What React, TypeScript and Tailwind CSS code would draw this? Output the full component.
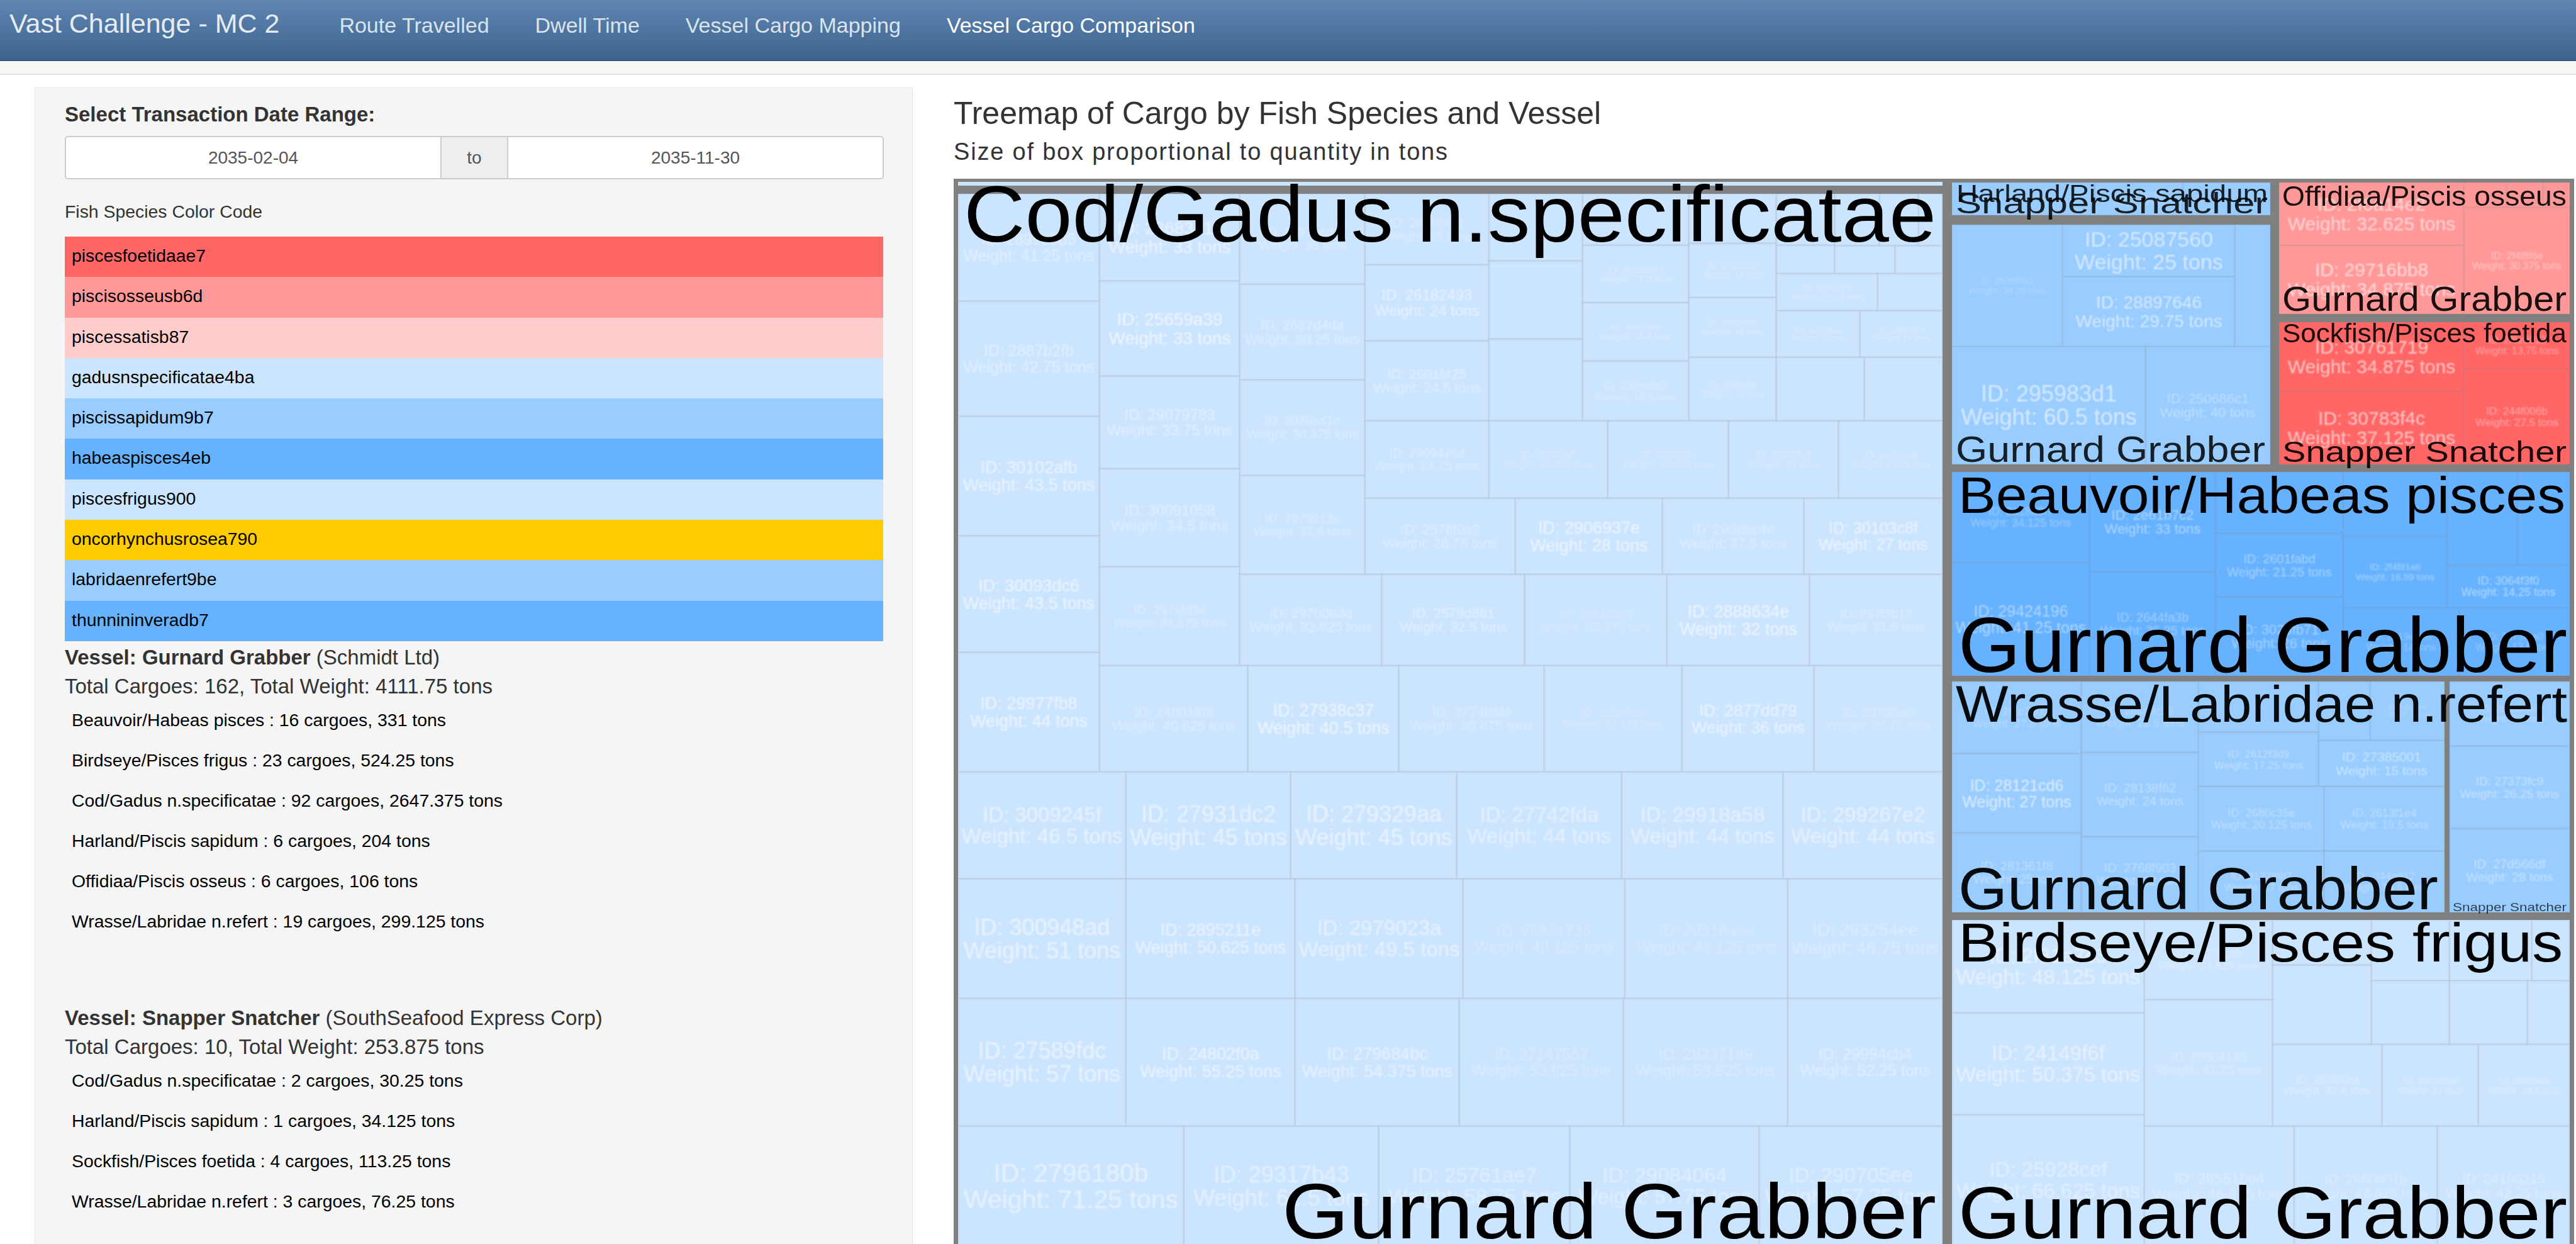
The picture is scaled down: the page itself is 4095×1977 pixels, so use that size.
type Cell = [number, number, number, number, string?, string?, number?, number?];

type Group = {
    x: number;
    y: number;
    r: number;
    b: number;
    fill: string;
    cells: Cell[];
};

type BigLabel = [string, number, number, number, number, number?];

const Y_END = 1980;

const cargoColors = [
    ['piscesfoetidaae7', 'bg-[#ff6666]'],
    ['piscisosseusb6d', 'bg-[#ff9999]'],
    ['piscessatisb87', 'bg-[#ffcccc]'],
    ['gadusnspecificatae4ba', 'bg-[#cce5ff]'],
    ['piscissapidum9b7', 'bg-[#99ccff]'],
    ['habeaspisces4eb', 'bg-[#66b2ff]'],
    ['piscesfrigus900', 'bg-[#cce5ff]'],
    ['oncorhynchusrosea790', 'bg-[#ffcc00]'],
    ['labridaenrefert9be', 'bg-[#99ccff]'],
    ['thunnininveradb7', 'bg-[#66b2ff]'],
];

const groups: Group[] = [
    {
        x: 1523, y: 308, r: 3088, b: Y_END, fill: '#cce5ff',
        cells: [
            [1523, 308, 1748, 479, 'ID: 2899e9d5', 'Weight: 41.25 tons', 25, 0.5],
            [1523, 479, 1748, 662, 'ID: 2887b2fb', 'Weight: 42.75 tons', 25, 0.5],
            [1523, 662, 1748, 852, 'ID: 30102afb', 'Weight: 43.5 tons', 27, 0.7],
            [1523, 852, 1748, 1037, 'ID: 30093dc6', 'Weight: 43.5 tons', 27, 0.75],
            [1523, 1037, 1748, 1227, 'ID: 29977fb8', 'Weight: 44 tons', 27, 0.75],
            [1748, 308, 1971, 447, 'ID: 28683a1c', 'Weight: 33 tons', 28, 0.7],
            [1748, 447, 1971, 598, 'ID: 25659a39', 'Weight: 33 tons', 28, 0.8],
            [1748, 598, 1971, 745, 'ID: 29079783', 'Weight: 33.75 tons', 24, 0.5],
            [1748, 745, 1971, 901, 'ID: 30091058', 'Weight: 34.5 tons', 24, 0.45],
            [1748, 901, 1971, 1058, 'ID: 2976fd36', 'Weight: 34.875 tons', 20, 0.35],
            [1971, 308, 2170, 452, 'ID: 2797a6d1', 'Weight: 35 tons', 20, 0.4],
            [1971, 452, 2170, 604, 'ID: 2687d4da', 'Weight: 30.25 tons', 22, 0.45],
            [1971, 604, 2170, 756, 'ID: 3045a41e', 'Weight: 30.375 tons', 20, 0.4],
            [1971, 756, 2170, 913, 'ID: 2976913e', 'Weight: 31.5 tons', 20, 0.35],
            [2170, 308, 2367, 421, 'ID: 2876c4a1', 'Weight: 26 tons', 20, 0.35],
            [2170, 421, 2367, 542, 'ID: 26182493', 'Weight: 24 tons', 24, 0.6],
            [2170, 542, 2367, 669, 'ID: 2601f425', 'Weight: 24.5 tons', 22, 0.45],
            [2367, 308, 2516, 415],
            [2367, 415, 2516, 539],
            [2367, 539, 2516, 669],
            [2516, 308, 2685, 390],
            [2516, 390, 2685, 481, 'ID: 2833a6e1', 'Weight: 18.5 tons', 15, 0.3],
            [2516, 481, 2685, 574, 'ID: 263f2a5c', 'Weight: 19.5 tons', 15, 0.3],
            [2516, 574, 2685, 669, 'ID: 2906d6d2', 'Weight: 19.5 tons', 17, 0.3],
            [2685, 308, 2824, 387],
            [2685, 387, 2824, 473, 'ID: 27365fa2', 'Weight: 17 tons', 14, 0.3],
            [2685, 473, 2824, 568, 'ID: 28f75d7c', 'Weight: 18 tons', 14, 0.3],
            [2685, 568, 2824, 669, 'ID: 2f4f8d3e', 'Weight: 18 tons', 14, 0.3],
            [2824, 308, 2917, 390],
            [2824, 390, 2917, 435],
            [2917, 390, 3013, 435],
            [3013, 390, 3088, 435],
            [2917, 308, 2988, 390],
            [2988, 308, 3050, 390],
            [3050, 308, 3088, 390],
            [2824, 435, 2985, 494, 'ID: 2f3a7c5d', 'Weight: 15.75 tons', 14, 0.3],
            [2985, 435, 3088, 494],
            [2824, 494, 2957, 568, 'ID: 2a51f3ae', 'Weight: 16 tons', 13, 0.3],
            [2957, 494, 3088, 568, 'ID: 2f99c8d7', 'Weight: 16 tons', 13, 0.3],
            [2824, 568, 2964, 669],
            [2964, 568, 3088, 669],
            [2170, 669, 2367, 792, 'ID: 2909426d', 'Weight: 24.75 tons', 20, 0.35],
            [2367, 669, 2556, 792, 'ID: 2fd9f1a3', 'Weight: 25.625 tons', 16, 0.25],
            [2556, 669, 2748, 792, 'ID: 2b3fb27e', 'Weight: 25.563 tons', 16, 0.25],
            [2748, 669, 2923, 792, 'ID: 2f38d4c1', 'Weight: 27 tons', 16, 0.25],
            [2923, 669, 3088, 792, 'ID: 2a33c9df', 'Weight: 27.75 tons', 15, 0.25],
            [2170, 792, 2409, 913, 'ID: 2578f0a9', 'Weight: 28.75 tons', 22, 0.4],
            [2409, 792, 2643, 913, 'ID: 2906937e', 'Weight: 28 tons', 27, 0.75],
            [2643, 792, 2868, 913, 'ID: 2938bc4e', 'Weight: 27.5 tons', 22, 0.35],
            [2868, 792, 3088, 913, 'ID: 30103c8f', 'Weight: 27 tons', 25, 0.7],
            [1971, 913, 2197, 1058, 'ID: 2970083d', 'Weight: 32.625 tons', 22, 0.4],
            [2197, 913, 2424, 1058, 'ID: 2579d861', 'Weight: 32.5 tons', 22, 0.5],
            [2424, 913, 2650, 1058, 'ID: 2a61c2c9', 'Weight: 32.375 tons', 20, 0.2],
            [2650, 913, 2877, 1058, 'ID: 2888634e', 'Weight: 32 tons', 27, 0.8],
            [2877, 913, 3088, 1058, 'ID: 2970fb16', 'Weight: 31.5 tons', 20, 0.35],
            [1748, 1058, 1984, 1227, 'ID: 24801f08', 'Weight: 40.625 tons', 22, 0.4],
            [1984, 1058, 2224, 1227, 'ID: 27938c37', 'Weight: 40.5 tons', 27, 0.8],
            [2224, 1058, 2455, 1227, 'ID: 2774b6f4', 'Weight: 39.875 tons', 22, 0.35],
            [2455, 1058, 2674, 1227, 'ID: 2a5b7fd4', 'Weight: 37.125 tons', 18, 0.2],
            [2674, 1058, 2884, 1227, 'ID: 2877dd79', 'Weight: 36 tons', 26, 0.7],
            [2884, 1058, 3088, 1227, 'ID: 2975f8a6', 'Weight: 35.75 tons', 20, 0.25],
            [1523, 1227, 1790, 1397, 'ID: 3009245f', 'Weight: 46.5 tons', 33, 0.65],
            [1790, 1227, 2052, 1397, 'ID: 27931dc2', 'Weight: 45 tons', 36, 0.65],
            [2052, 1227, 2316, 1397, 'ID: 279329aa', 'Weight: 45 tons', 36, 0.65],
            [2316, 1227, 2578, 1397, 'ID: 27742fda', 'Weight: 44 tons', 33, 0.55],
            [2578, 1227, 2835, 1397, 'ID: 29918a58', 'Weight: 44 tons', 33, 0.55],
            [2835, 1227, 3088, 1397, 'ID: 299267e2', 'Weight: 44 tons', 33, 0.6],
            [1523, 1397, 1790, 1587, 'ID: 300948ad', 'Weight: 51 tons', 36, 0.65],
            [1790, 1397, 2059, 1587, 'ID: 2895211e', 'Weight: 50.625 tons', 27, 0.7],
            [2059, 1397, 2326, 1587, 'ID: 2979023a', 'Weight: 49.5 tons', 33, 0.6],
            [2326, 1397, 2583, 1587, 'ID: 28831735', 'Weight: 48.125 tons', 25, 0.25],
            [2583, 1397, 2842, 1587, 'ID: 29318abe', 'Weight: 48.125 tons', 25, 0.25],
            [2842, 1397, 3088, 1587, 'ID: 293254ee', 'Weight: 46.75 tons', 28, 0.35],
            [1523, 1587, 1790, 1790, 'ID: 27589fdc', 'Weight: 57 tons', 36, 0.65],
            [1790, 1587, 2059, 1790, 'ID: 24802f0a', 'Weight: 55.25 tons', 27, 0.7],
            [2059, 1587, 2320, 1790, 'ID: 279684bc', 'Weight: 54.375 tons', 27, 0.6],
            [2320, 1587, 2581, 1790, 'ID: 27147557', 'Weight: 53.625 tons', 25, 0.3],
            [2581, 1587, 2842, 1790, 'ID: 292371a9', 'Weight: 53.625 tons', 25, 0.3],
            [2842, 1587, 3088, 1790, 'ID: 29994cb4', 'Weight: 52.25 tons', 25, 0.45],
            [1523, 1790, 1882, Y_END, 'ID: 2796180b', 'Weight: 71.25 tons', 41, 0.6],
            [1882, 1790, 2192, Y_END, 'ID: 29317b43', 'Weight: 61.5 tons', 36, 0.55],
            [2192, 1790, 2496, Y_END, 'ID: 25761ae7', 'Weight: 58.75 tons', 33, 0.45],
            [2496, 1790, 2797, Y_END, 'ID: 29084064', 'Weight: 57.75 tons', 33, 0.45],
            [2797, 1790, 3088, Y_END, 'ID: 290705ee', 'Weight: 57.75 tons', 33, 0.45],
        ],
    },
    {
        x: 3103, y: 290, r: 3609, b: 342, fill: '#99ccff',
        cells: [
            [3103, 290, 3330, 342],
            [3330, 290, 3470, 342, 'ID: 2a1f4c9e', 'Weight: 13 tons', 12, 0.3],
            [3470, 290, 3609, 342],
        ],
    },
    {
        x: 3103, y: 357, r: 3609, b: 738, fill: '#99ccff',
        cells: [
            [3103, 357, 3279, 551, 'ID: 2b36f9a1', 'Weight: 38.25 tons', 15, 0.3],
            [3279, 357, 3553, 440, 'ID: 25087560', 'Weight: 25 tons', 34, 0.7],
            [3279, 440, 3553, 551, 'ID: 28897646', 'Weight: 29.75 tons', 28, 0.7],
            [3553, 357, 3609, 551],
            [3103, 551, 3411, 738, 'ID: 295983d1', 'Weight: 60.5 tons', 36, 0.7],
            [3411, 551, 3609, 738, 'ID: 250686c1', 'Weight: 40 tons', 22, 0.45],
        ],
    },
    {
        x: 3623, y: 290, r: 4085, b: 499, fill: '#ff9999',
        cells: [
            [3623, 290, 3917, 390, 'ID: 2f6a14e2', 'Weight: 32.625 tons', 30, 0.7],
            [3623, 390, 3917, 499, 'ID: 29716bb8', 'Weight: 34.875 tons', 30, 0.75],
            [3917, 290, 3985, 330],
            [3985, 290, 4043, 330],
            [4043, 290, 4085, 330],
            [3917, 330, 4085, 499, 'ID: 2f4f8f6e', 'Weight: 30.375 tons', 16, 0.5],
        ],
    },
    {
        x: 3623, y: 512, r: 4085, b: 738, fill: '#ff6666',
        cells: [
            [3623, 512, 3917, 622, 'ID: 30761719', 'Weight: 34.875 tons', 30, 0.75],
            [3623, 622, 3917, 738, 'ID: 30783f4c', 'Weight: 37.125 tons', 30, 0.75],
            [3917, 512, 4085, 586, 'ID: 2f6e9012', 'Weight: 13.75 tons', 16, 0.45],
            [3917, 586, 4085, 738, 'ID: 244f006b', 'Weight: 27.5 tons', 17, 0.5],
        ],
    },
    {
        x: 3103, y: 750, r: 4085, b: 1074, fill: '#66b2ff',
        cells: [
            [3103, 750, 3322, 894, 'ID: 2a18d3f7', 'Weight: 34.125 tons', 18, 0.4],
            [3103, 894, 3322, 1074, 'ID: 29424196', 'Weight: 41.25 tons', 25, 0.55],
            [3322, 750, 3522, 909, 'ID: 2e61b7c2', 'Weight: 33 tons', 22, 0.55],
            [3322, 909, 3522, 1074, 'ID: 2644fa3b', 'Weight: 35.25 tons', 20, 0.45],
            [3522, 750, 3725, 848],
            [3522, 848, 3725, 949, 'ID: 2601fabd', 'Weight: 21.25 tons', 20, 0.5],
            [3522, 949, 3725, 1074, 'ID: 3023fb71', 'Weight: 26 tons', 22, 0.5],
            [3725, 750, 3890, 852],
            [3725, 852, 3890, 966, 'ID: 2f4f81a6', 'Weight: 16.59 tons', 15, 0.5],
            [3890, 750, 4002, 898],
            [4002, 750, 4085, 898],
            [3890, 898, 4085, 966, 'ID: 3064f3f0', 'Weight: 14.25 tons', 18, 0.6],
            [3725, 966, 3909, 1074, 'ID: 2e19a4c8', 'Weight: 14 tons', 16, 0.35],
            [3909, 966, 4085, 1074, 'ID: 2d73f1a0', 'Weight: 13.5 tons', 16, 0.35],
        ],
    },
    {
        x: 3103, y: 1083, r: 3886, b: 1450, fill: '#99ccff',
        cells: [
            [3103, 1083, 3309, 1198, 'ID: 2f1c7a03', 'Weight: 27.5 tons', 18, 0.35],
            [3103, 1198, 3309, 1324, 'ID: 28121cd6', 'Weight: 27 tons', 25, 0.8],
            [3103, 1324, 3309, 1450, 'ID: 281361f8', 'Weight: 25 tons', 20, 0.45],
            [3309, 1083, 3495, 1196, 'ID: 2b4d9c16', 'Weight: 22.5 tons', 18, 0.35],
            [3309, 1196, 3495, 1330, 'ID: 28138f62', 'Weight: 24 tons', 20, 0.5],
            [3309, 1330, 3495, 1450, 'ID: 2768f903', 'Weight: 22 tons', 20, 0.45],
            [3495, 1083, 3686, 1164],
            [3495, 1164, 3686, 1250, 'ID: 2612f3d9', 'Weight: 17.25 tons', 17, 0.5],
            [3686, 1083, 3768, 1177],
            [3768, 1083, 3886, 1177, 'ID: 2a0f16b4', 'Weight: 9 tons', 11, 0.3],
            [3686, 1177, 3886, 1250, 'ID: 27385001', 'Weight: 15 tons', 21, 0.6],
            [3495, 1250, 3695, 1353, 'ID: 2680c35e', 'Weight: 20.125 tons', 18, 0.45],
            [3695, 1250, 3886, 1353, 'ID: 2613f1e4', 'Weight: 19.5 tons', 18, 0.45],
            [3495, 1353, 3695, 1450, 'ID: 312289f7', 'Weight: 17 tons', 17, 0.4],
            [3695, 1353, 3886, 1450, 'ID: 2f44a612', 'Weight: 16.5 tons', 17, 0.4],
        ],
    },
    {
        x: 3894, y: 1083, r: 4085, b: 1450, fill: '#99ccff',
        cells: [
            [3894, 1083, 4085, 1186, 'ID: 2d08e4b1', 'Weight: 22 tons', 16, 0.35],
            [3894, 1186, 4085, 1317, 'ID: 27373fc9', 'Weight: 26.25 tons', 19, 0.55],
            [3894, 1317, 4085, 1450, 'ID: 27d566df', 'Weight: 28 tons', 20, 0.55],
        ],
    },
    {
        x: 3103, y: 1462, r: 4085, b: Y_END, fill: '#cce5ff',
        cells: [
            [3103, 1462, 3409, 1610, 'ID: 2f81a7c3', 'Weight: 48.125 tons', 33, 0.6],
            [3103, 1610, 3409, 1772, 'ID: 24149f6f', 'Weight: 50.375 tons', 33, 0.6],
            [3103, 1772, 3409, Y_END, 'ID: 25928cef', 'Weight: 66.625 tons', 33, 0.5],
            [3409, 1462, 3613, 1589, 'ID: 2c70f1d8', 'Weight: 37.625 tons', 18, 0.35],
            [3409, 1589, 3613, 1790, 'ID: 26604196', 'Weight: 41.25 tons', 20, 0.35],
            [3613, 1462, 3770, 1534],
            [3613, 1534, 3770, 1660],
            [3770, 1462, 3894, 1559],
            [3894, 1462, 4025, 1559],
            [4025, 1462, 4085, 1559],
            [3770, 1559, 3894, 1660],
            [3894, 1559, 4018, 1660],
            [4018, 1559, 4085, 1660],
            [3613, 1660, 3787, 1790, 'ID: 2639f6ca', 'Weight: 22.5 tons', 18, 0.4],
            [3787, 1660, 3940, 1790, 'ID: 2901f38a', 'Weight: 21 tons', 15, 0.35],
            [3940, 1660, 4085, 1790, 'ID: 2f3f3a6a', 'Weight: 19.5 tons', 15, 0.35],
            [3409, 1790, 3647, Y_END, 'ID: 28551be4', 'Weight: 46.875 tons', 24, 0.35],
            [3647, 1790, 3875, Y_END, 'ID: 2660001b', 'Weight: 43.625 tons', 22, 0.3],
            [3875, 1790, 4085, Y_END, 'ID: 24190215', 'Weight: 42.25 tons', 22, 0.35],
        ],
    },
];

// text, left x, baseline y, width, font size, opacity
const bigLabels: BigLabel[] = [
    ['Cod/Gadus n.specificatae', 1532, 384, 1546, 126],
    ['Gurnard Grabber', 2038, 1968, 1040, 124],
    ['Harland/Piscis sapidum', 3110, 321, 495, 38, 0.85],
    ['Snapper Snatcher', 3109, 339, 496, 46, 0.85],
    ['Gurnard Grabber', 3109, 734, 492, 58, 0.85],
    ['Offidiaa/Piscis osseus', 3628, 327, 452, 44, 0.9],
    ['Gurnard Grabber', 3628, 494, 452, 56, 0.9],
    ['Sockfish/Pisces foetida', 3628, 544, 452, 42, 0.9],
    ['Snapper Snatcher', 3628, 734, 452, 46, 0.9],
    ['Beauvoir/Habeas pisces', 3113, 815, 965, 82],
    ['Gurnard Grabber', 3113, 1068, 968, 124],
    ['Wrasse/Labridae n.refert', 3109, 1147, 972, 82, 0.95],
    ['Gurnard Grabber', 3113, 1445, 763, 94, 0.95],
    ['Snapper Snatcher', 3899, 1448, 181, 18, 0.7],
    ['Birdseye/Pisces frigus', 3113, 1528, 961, 88],
    ['Gurnard Grabber', 3113, 1968, 968, 116],
];

const vessels = [
    {
        name: 'Gurnard Grabber',
        owner: '(Schmidt Ltd)',
        total: 'Total Cargoes: 162, Total Weight: 4111.75 tons',
        rows: [
            'Beauvoir/Habeas pisces : 16 cargoes, 331 tons',
            'Birdseye/Pisces frigus : 23 cargoes, 524.25 tons',
            'Cod/Gadus n.specificatae : 92 cargoes, 2647.375 tons',
            'Harland/Piscis sapidum : 6 cargoes, 204 tons',
            'Offidiaa/Piscis osseus : 6 cargoes, 106 tons',
            'Wrasse/Labridae n.refert : 19 cargoes, 299.125 tons',
        ],
    },
    {
        name: 'Snapper Snatcher',
        owner: '(SouthSeafood Express Corp)',
        total: 'Total Cargoes: 10, Total Weight: 253.875 tons',
        rows: [
            'Cod/Gadus n.specificatae : 2 cargoes, 30.25 tons',
            'Harland/Piscis sapidum : 1 cargoes, 34.125 tons',
            'Sockfish/Pisces foetida : 4 cargoes, 113.25 tons',
            'Wrasse/Labridae n.refert : 3 cargoes, 76.25 tons',
        ],
    },
];

function Treemap() {
    return (
        <svg viewBox="1516 284 2579 1693" className="block h-[1693px] w-[2579px]">
            <rect x="1516" y="284" width="2576" height="1700" fill="#808080" />
            <rect x="1523" y="289" width="1565" height="6" fill="#cce5ff" />
            {groups.map((group, i) => (
                <g key={i}>
                    <rect x={group.x} y={group.y} width={group.r - group.x} height={group.b - group.y} fill={group.fill} />
                    {group.cells.map((cell, j) => (
                        <rect
                            key={j}
                            x={cell[0]}
                            y={cell[1]}
                            width={cell[2] - cell[0]}
                            height={cell[3] - cell[1]}
                            fill={group.fill}
                            stroke="#808080"
                            strokeOpacity={0.12}
                            strokeWidth={3}
                        />
                    ))}
                </g>
            ))}
            <g className="blur-[1.2px]" fontFamily="'Liberation Sans', Arial, sans-serif" textAnchor="middle" fill="#ffffff">
                {groups.flatMap((group) => group.cells).map((cell, i) => {
                    if (!cell[4]) return null;
                    const cx = (cell[0] + cell[2]) / 2;
                    const cy = (cell[1] + cell[3]) / 2;
                    const size = cell[6] ?? 20;
                    return (
                        <g key={i} fontSize={size} opacity={(cell[7] ?? 0.5) * 0.85}>
                            <text x={cx} y={cy - size * 0.18}>{cell[4]}</text>
                            <text x={cx} y={cy + size * 0.86}>{cell[5]}</text>
                        </g>
                    );
                })}
            </g>
            <g className="blur-[0.6px]" fontFamily="'Liberation Sans', Arial, sans-serif" fill="#000000">
                {bigLabels.map(([label, x, y, width, size, opacity], i) => (
                    <text
                        key={i}
                        x={x}
                        y={y}
                        fontSize={size}
                        opacity={opacity}
                        textLength={width}
                        lengthAdjust="spacingAndGlyphs"
                    >
                        {label}
                    </text>
                ))}
            </g>
        </svg>
    );
}

function Sidebar() {
    return (
        <div className="ml-[55px] h-[1860px] w-[1396px] shrink-0 border border-[#e3e3e3] bg-[#f5f5f5] pl-[47px] pr-[46px] pt-[22px]">
            <div className="h-[40px] text-[33px] font-bold leading-[40px] text-[#333333]">
                Select Transaction Date Range:
            </div>
            <div className="mt-[14px] flex h-[69px] w-[1302px] items-center overflow-hidden rounded-[5px] border-2 border-[#cccccc] bg-white text-[28px] text-[#555555]">
                <div className="flex-1 text-center">2035-02-04</div>
                <div className="flex h-full w-[108px] items-center justify-center border-x-2 border-[#cccccc] bg-[#eeeeee]">to</div>
                <div className="flex-1 text-center">2035-11-30</div>
            </div>
            <div className="mt-[34px] h-[34px] text-[28.4px] leading-[34px] text-[#333333]">Fish Species Color Code</div>
            <div className="mt-[23px] flex flex-col">
                {cargoColors.map(([name, color]) => (
                    <div key={name} className={`flex h-[64.3px] items-start pl-[11px] pt-[13px] text-[28.4px] leading-[34px] text-black ${color}`}>
                        {name}
                    </div>
                ))}
            </div>
            {vessels.map((vessel, i) => (
                <div key={vessel.name} className={i === 0 ? 'mt-[7px] h-[573px]' : 'mt-0'}>
                    <div className="h-[38px] text-[33px] leading-[38px] text-[#333333]">
                        <b>Vessel: {vessel.name}</b> {vessel.owner}
                    </div>
                    <div className="mt-[8px] h-[38px] text-[33px] leading-[38px] text-[#333333]">{vessel.total}</div>
                    <div className="mt-[17px] flex flex-col gap-[30px] pl-[11px] text-[28.4px] leading-[34px] text-black">
                        {vessel.rows.map((row) => (
                            <div key={row}>{row}</div>
                        ))}
                    </div>
                </div>
            ))}
        </div>
    );
}

export default function App() {
    return (
        <div className="h-[1977px] w-[4095px] overflow-hidden bg-white font-['Liberation_Sans',Arial,sans-serif]">
            <div className="flex h-[97px] items-start border-b-2 border-[#2f5379] bg-gradient-to-b from-[#5f87b2] to-[#3e638f]">
                <div className="ml-[15px] mt-[12px] text-[43px] leading-[50px] text-[#e6ebf1]">Vast Challenge - MC 2</div>
                <div className="ml-[95px] mt-[20px] flex gap-[73px] text-[34px] leading-[40px] text-[#dbe3ec]">
                    <span>Route Travelled</span>
                    <span>Dwell Time</span>
                    <span>Vessel Cargo Mapping</span>
                    <span className="text-white">Vessel Cargo Comparison</span>
                </div>
            </div>
            <div className="h-[22px] border-b-2 border-[#e2e2e2] bg-[#f6f6f6]" />
            <div className="flex pt-[20px]">
                <Sidebar />
                <div className="ml-[65px]">
                    <div className="mt-[18px] h-[46px] whitespace-nowrap text-[50px] leading-[46px] text-[#333333]">
                        Treemap of Cargo by Fish Species and Vessel
                    </div>
                    <div className="mt-[18px] h-[40px] whitespace-nowrap text-[38px] leading-[40px] tracking-[1.8px] text-[#333333]">
                        Size of box proportional to quantity in tons
                    </div>
                    <div className="mt-[23px]">
                        <Treemap />
                    </div>
                </div>
            </div>
        </div>
    );
}
